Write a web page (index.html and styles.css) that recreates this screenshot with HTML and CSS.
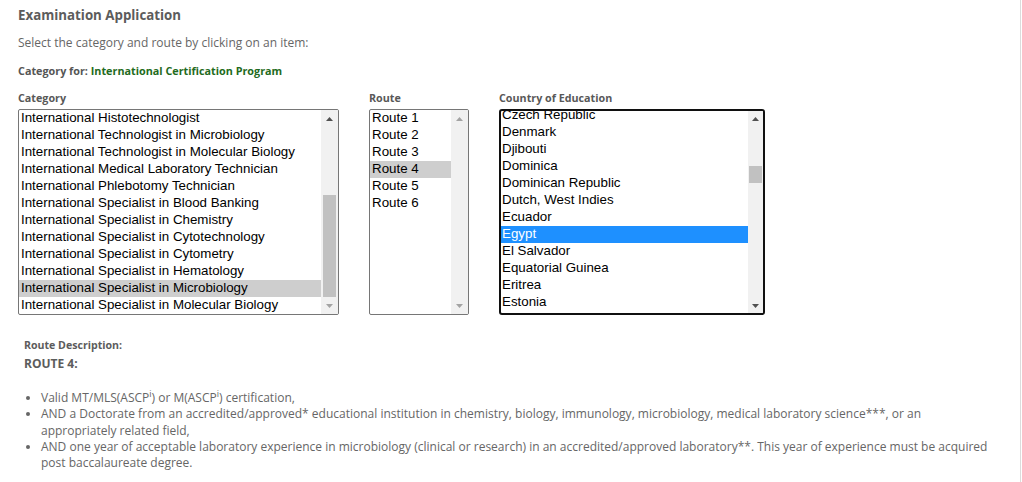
FILE: index.html
```html
<!DOCTYPE html>
<html lang="en">
<head>
<meta charset="utf-8">
<title>Examination Application</title>
<link rel="stylesheet" href="styles.css">
</head>
<body>
<div class="page">
  <h1 class="title">Examination Application</h1>
  <p class="intro">Select the category and route by clicking on an item:</p>
  <p class="catfor">Category for: <span class="prog">International Certification Program</span></p>

  <div class="fields">
    <div class="field field-cat">
      <div class="label">Category</div>
      <div class="listbox">
        <ul class="opts">
          <li>International Histotechnologist</li>
          <li>International Technologist in Microbiology</li>
          <li>International Technologist in Molecular Biology</li>
          <li>International Medical Laboratory Technician</li>
          <li>International Phlebotomy Technician</li>
          <li>International Specialist in Blood Banking</li>
          <li>International Specialist in Chemistry</li>
          <li>International Specialist in Cytotechnology</li>
          <li>International Specialist in Cytometry</li>
          <li>International Specialist in Hematology</li>
          <li class="sel">International Specialist in Microbiology</li>
          <li>International Specialist in Molecular Biology</li>
        </ul>
        <div class="sb">
          <div class="sb-btn"><svg width="7" height="4" viewBox="0 0 7 4"><polygon points="0,4 3.5,0 7,4"/></svg></div>
          <div class="sb-track track-end"><div class="thumb thumb-cat"></div></div>
          <div class="sb-btn off"><svg width="7" height="4" viewBox="0 0 7 4"><polygon points="0,0 3.5,4 7,0"/></svg></div>
        </div>
      </div>
    </div>

    <div class="field field-route">
      <div class="label">Route</div>
      <div class="listbox">
        <ul class="opts">
          <li>Route 1</li>
          <li>Route 2</li>
          <li>Route 3</li>
          <li class="sel">Route 4</li>
          <li>Route 5</li>
          <li>Route 6</li>
        </ul>
        <div class="sb">
          <div class="sb-btn off"><svg width="7" height="4" viewBox="0 0 7 4"><polygon points="0,4 3.5,0 7,4"/></svg></div>
          <div class="sb-track"></div>
          <div class="sb-btn off"><svg width="7" height="4" viewBox="0 0 7 4"><polygon points="0,0 3.5,4 7,0"/></svg></div>
        </div>
      </div>
    </div>

    <div class="field field-country">
      <div class="label">Country of Education</div>
      <div class="listbox focused">
        <ul class="opts opts-scrolled">
          <li>Czech Republic</li>
          <li>Denmark</li>
          <li>Djibouti</li>
          <li>Dominica</li>
          <li>Dominican Republic</li>
          <li>Dutch, West Indies</li>
          <li>Ecuador</li>
          <li class="sel-active">Egypt</li>
          <li>El Salvador</li>
          <li>Equatorial Guinea</li>
          <li>Eritrea</li>
          <li>Estonia</li>
        </ul>
        <div class="sb sb-narrow">
          <div class="sb-btn"><svg width="7" height="4" viewBox="0 0 7 4"><polygon points="0,4 3.5,0 7,4"/></svg></div>
          <div class="sb-track"><div class="thumb thumb-country"></div></div>
          <div class="sb-btn"><svg width="7" height="4" viewBox="0 0 7 4"><polygon points="0,0 3.5,4 7,0"/></svg></div>
        </div>
      </div>
    </div>
  </div>

  <div class="desc">
    <div class="desc-label">Route Description:</div>
    <div class="route">ROUTE 4:</div>
    <ul class="reqs">
      <li>Valid MT/MLS(ASCP<sup>i</sup>) or M(ASCP<sup>i</sup>) certification,</li>
      <li>AND a Doctorate from an accredited/approved* educational institution in chemistry, biology, immunology, microbiology, medical laboratory science***, or an appropriately related field,</li>
      <li>AND one year of acceptable laboratory experience in microbiology (clinical or research) in an accredited/approved laboratory**. This year of experience must be acquired post baccalaureate degree.</li>
    </ul>
  </div>
</div>
</body>
</html>
```

FILE: styles.css
```css
html, body {
  margin: 0;
  padding: 0;
  background: #fff;
}

body {
  font-family: "Open Sans", "Liberation Sans", sans-serif;
  color: #666;
}

.page {
  width: 984px;
  height: 477px;
  padding: 5px 18px 0 18px;
  border-right: 1px solid #dcdcdc;
  overflow: hidden;
}

.title {
  margin: 0;
  font-size: 13.3px;
  line-height: 20px;
  font-weight: 700;
  color: #5c5c5c;
}

.intro {
  margin: 9px 0 0;
  font-size: 12px;
  line-height: 18px;
  color: #666;
}

.catfor {
  margin: 11px 0 0;
  font-size: 10.8px;
  line-height: 16px;
  font-weight: 700;
  color: #555;
}

.prog {
  color: #1f6b21;
}

.fields {
  display: flex;
  gap: 30px;
  margin-top: 11px;
}

.field {
  display: flex;
  flex-direction: column;
}

.label {
  font-size: 10.75px;
  line-height: 16px;
  font-weight: 700;
  color: #585858;
  margin-bottom: 3px;
}

.field-cat .listbox { width: 321px; }
.field-route .listbox { width: 100px; }
.field-country .listbox { width: 266px; }

.listbox {
  box-sizing: border-box;
  height: 206px;
  border: 1px solid #767676;
  border-radius: 2px;
  display: flex;
  overflow: hidden;
  background: #fff;
}

.listbox.focused {
  border: 2px solid #101010;
  border-radius: 3px;
}

.opts {
  list-style: none;
  margin: 0;
  padding: 0;
  flex: 1;
  min-width: 0;
  font-family: "Liberation Sans", Arial, sans-serif;
  font-size: 13.333px;
  line-height: 16px;
  color: #000;
}

.opts-scrolled {
  margin-top: -4px;
}

.opts li {
  padding: 0 2px 1px;
  height: 16px;
  white-space: nowrap;
}

.opts-scrolled li {
  padding-left: 1px;
}

.opts li.sel {
  background: #cecece;
}

.opts li.sel-active {
  background: #1e90ff;
  color: #fff;
}

.sb {
  width: 17px;
  flex: none;
  display: flex;
  flex-direction: column;
  background: #f1f1f1;
}

.sb-narrow {
  width: 15px;
}

.sb-btn {
  height: 17px;
  flex: none;
  display: flex;
  align-items: center;
  justify-content: center;
}

.sb-narrow .sb-btn {
  height: 15px;
}

.sb-btn svg {
  display: block;
  fill: #505050;
}

.sb-btn.off svg {
  fill: #a3a3a3;
}

.sb-track {
  flex: 1;
  display: flex;
  flex-direction: column;
  padding: 0 2px;
}

.sb-narrow .sb-track {
  padding: 0 1px;
}

.track-end {
  justify-content: flex-end;
}

.thumb {
  background: #c1c1c1;
}

.thumb-cat {
  height: 102px;
}

.thumb-country {
  height: 17px;
  margin-top: 40px;
}

.desc {
  padding: 0 6px;
  margin-top: 22px;
}

.desc-label {
  font-size: 10.6px;
  line-height: 16px;
  font-weight: 700;
  color: #5c5c5c;
}

.route {
  margin-top: 2px;
  font-size: 12px;
  line-height: 18px;
  font-weight: 700;
  color: #5c5c5c;
}

.reqs {
  margin: 17px 0 0;
  padding-left: 17px;
  font-size: 12px;
  line-height: 16.25px;
  color: #666;
}

.reqs sup {
  font-size: 9px;
  line-height: 0;
  vertical-align: 5px;
}
```
